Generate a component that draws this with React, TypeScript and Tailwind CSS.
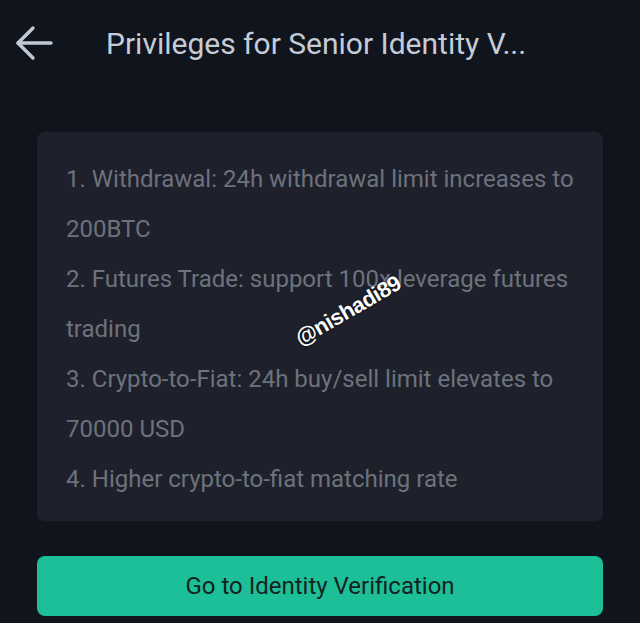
const items = [
  '1. Withdrawal: 24h withdrawal limit increases to 200BTC',
  '2. Futures Trade: support 100x leverage futures trading',
  '3. Crypto-to-Fiat: 24h buy/sell limit elevates to 70000 USD',
  '4. Higher crypto-to-fiat matching rate',
]

export default function App() {
  return (
    <div className="relative min-h-[623px] w-[640px] overflow-hidden bg-[#10141d] font-['Roboto',sans-serif]">
      {/* header */}
      <div className="flex h-[86px] items-center pl-[14px]">
        <svg width="40" height="40" viewBox="0 0 40 40" fill="none" stroke="#c2c9d6" strokeWidth="3.4" strokeLinecap="round" strokeLinejoin="round">
          <path d="M4 20H37" />
          <path d="M19 5L4 20L19 35" />
        </svg>
        <h1 className="ml-[52px] text-[30px] text-[#c5ccd8] whitespace-nowrap">Privileges for Senior Identity V...</h1>
      </div>

      <div className="px-[37px] pt-[46px]">
        <div className="rounded-[8px] bg-[#1e212b] pl-[29px] pr-[24px] pt-[22px] pb-[17px]">
          {items.map((t) => (
            <p key={t} className="text-[24px] leading-[50px] text-[#6d727d]">{t}</p>
          ))}
        </div>

        <button className="mt-[35px] flex h-[60px] w-full items-center justify-center rounded-[8px] bg-[#1dbf98] text-[24px] text-[#142320]">
          Go to Identity Verification
        </button>
      </div>

      {/* watermark */}
      <div className="absolute left-[289px] top-[294px] -rotate-[30deg] text-[22px] font-bold tracking-[-0.5px] text-white [text-shadow:0_0_2px_#000] font-['Liberation_Sans',sans-serif]">
        @nishadi89
      </div>
    </div>
  )
}
